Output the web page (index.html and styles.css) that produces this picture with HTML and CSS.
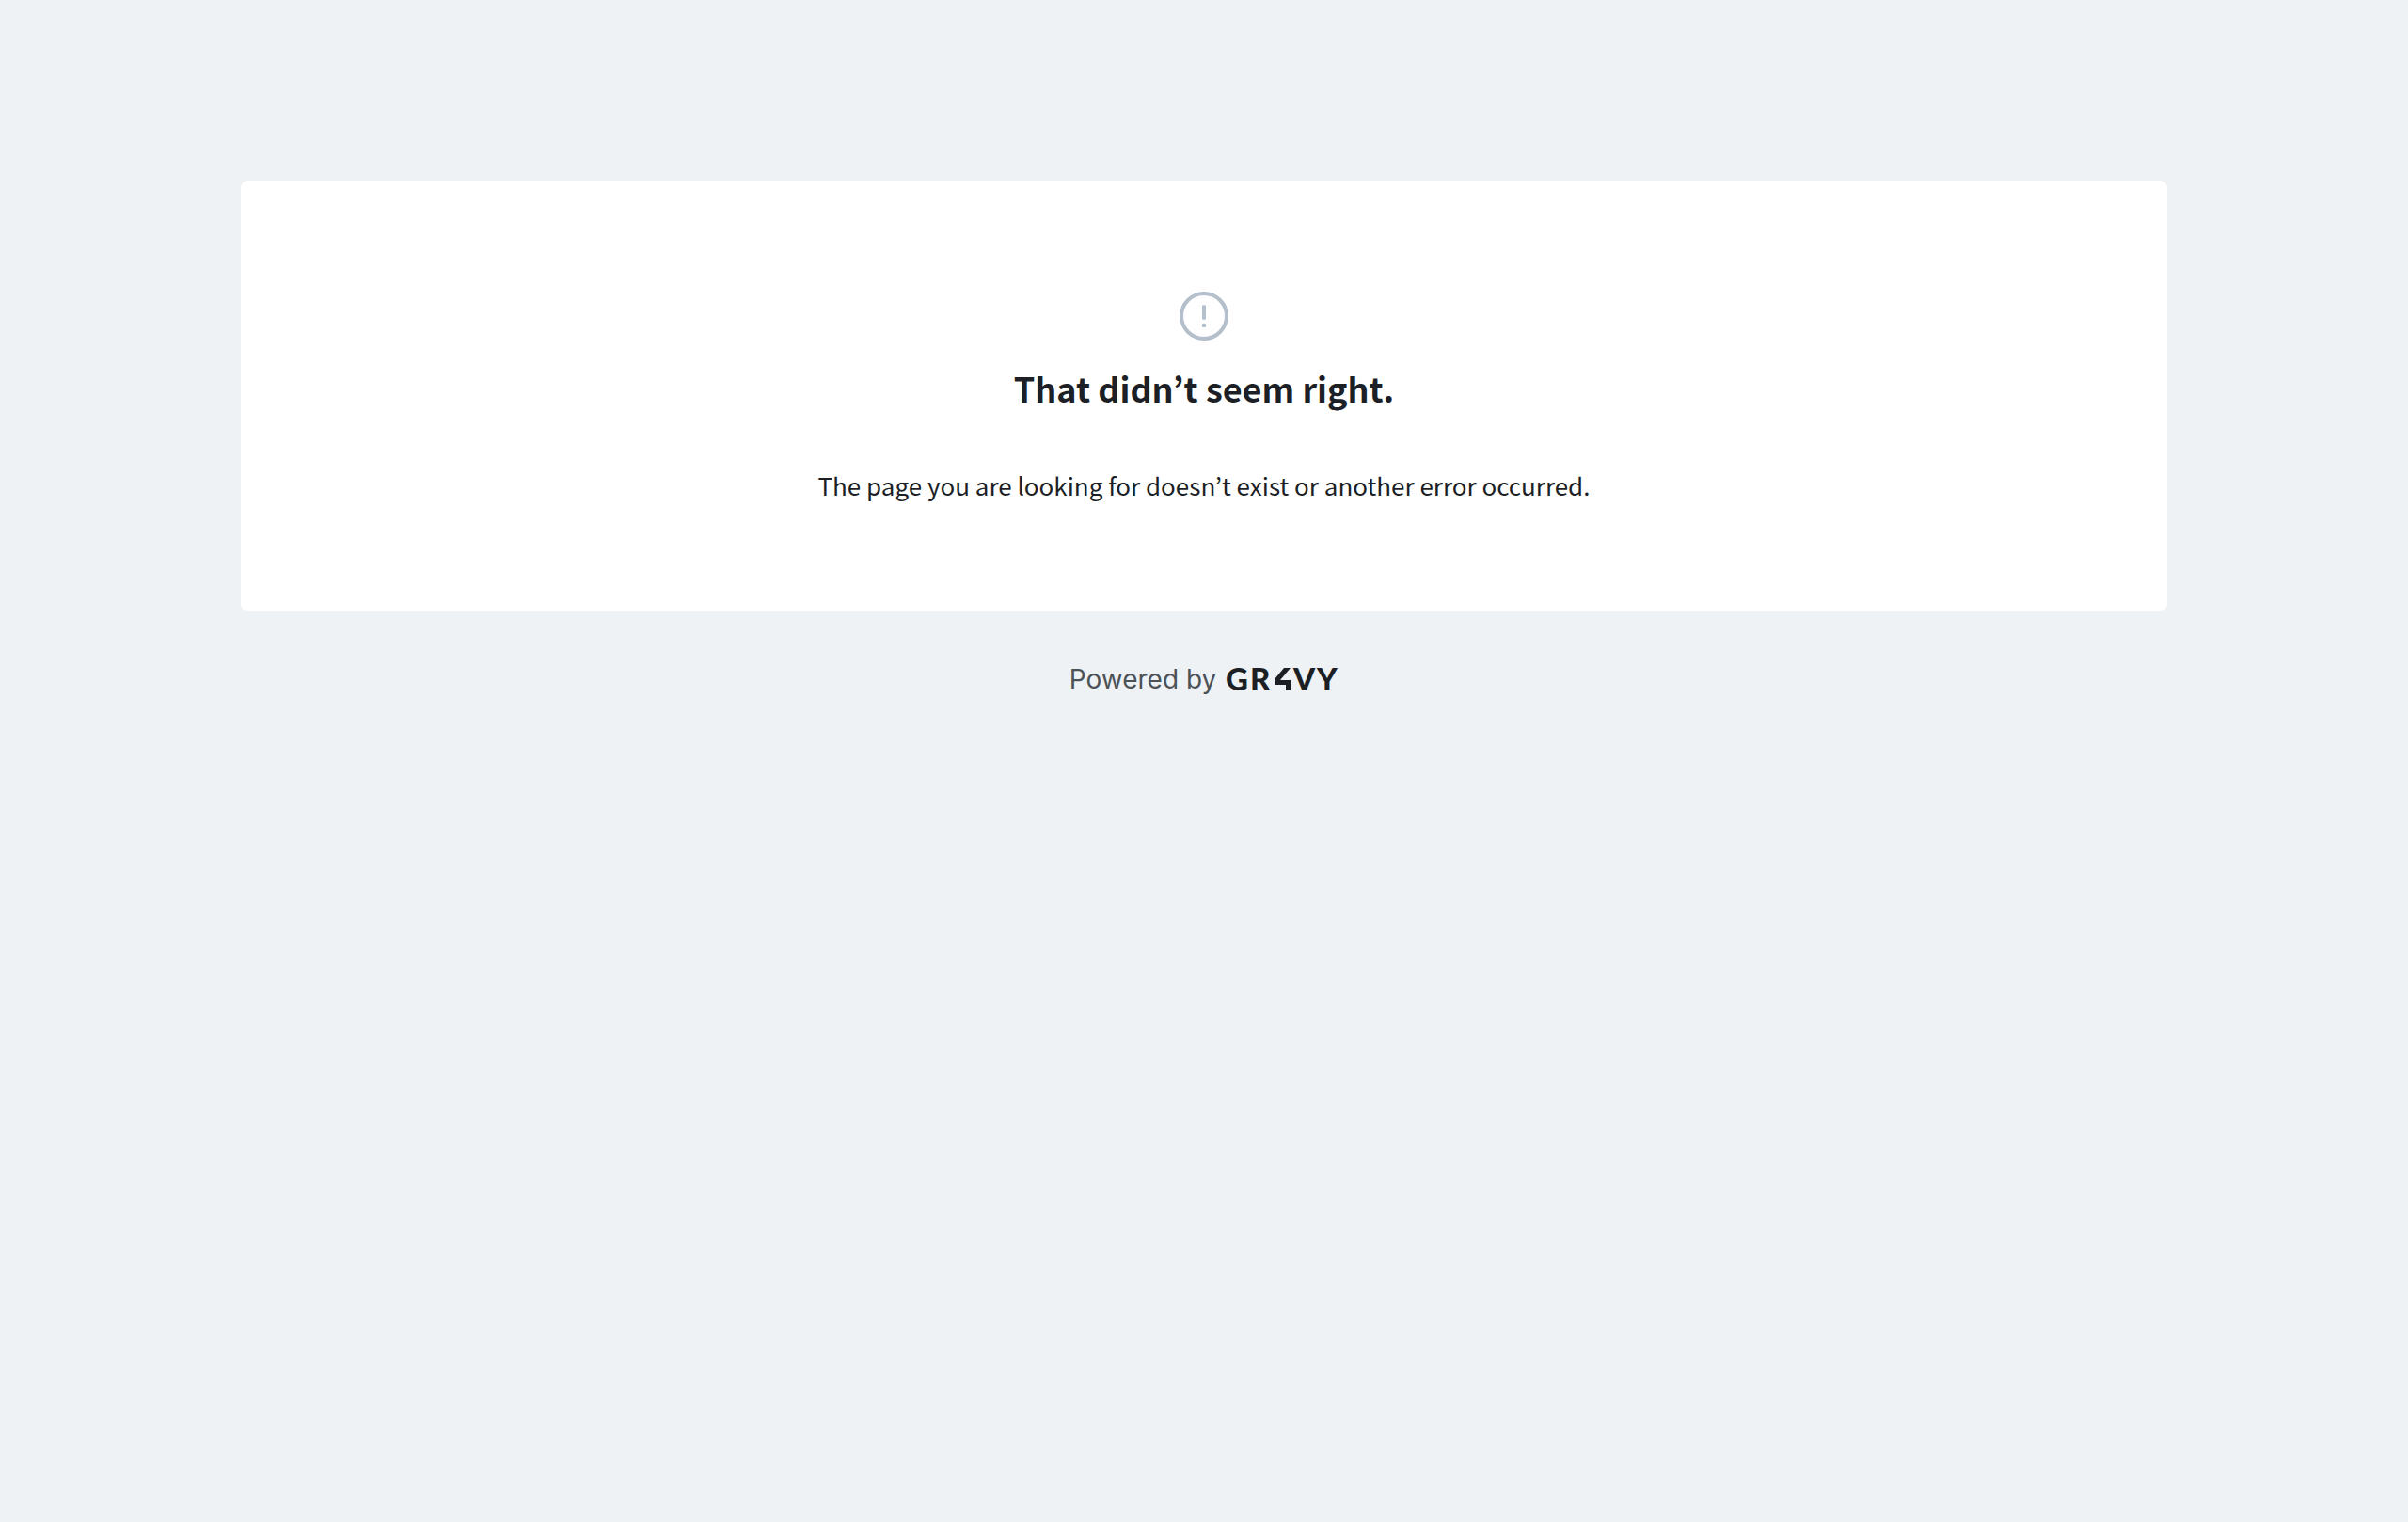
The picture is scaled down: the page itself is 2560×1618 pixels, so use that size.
FILE: index.html
```html
<!DOCTYPE html>
<html lang="en">
<head>
  <meta charset="utf-8">
  <meta name="viewport" content="width=device-width, initial-scale=1">
  <title>That didn’t seem right.</title>
  <link rel="stylesheet" href="styles.css">
</head>
<body>
  <main class="card">
    <svg class="card-icon" viewBox="0 0 64 64" aria-hidden="true">
      <circle cx="32" cy="32" r="24" fill="none" stroke="currentColor" stroke-width="4"/>
      <path d="M32 22v12" stroke="currentColor" stroke-width="4" stroke-linecap="round"/>
      <circle cx="32" cy="42" r="2.3" fill="currentColor"/>
    </svg>
    <h1 class="card-title">That didn’t seem right.</h1>
    <p class="card-text">The page you are looking for doesn’t exist or another error occurred.</p>
  </main>
  <footer class="footer">
    <span>Powered by</span>
    <svg class="logo" viewBox="0 0 120 40" role="img" aria-label="GR4VY">
      <text class="logo-text" x="0" y="32">G</text>
      <text class="logo-text" x="26" y="32">R</text>
      <path d="M62 8h7L58 21h11v11h-5v-6H52v-6z" fill="currentColor"/>
      <text class="logo-text" x="72" y="32">V</text>
      <text class="logo-text" x="97" y="32">Y</text>
    </svg>
  </footer>
</body>
</html>
```
FILE: styles.css
```css
body {
  margin: 0;
  padding: 192px 10%;
  background: #eef2f5;
  color: #1c1f26;
  font-family: "Noto Sans CJK KR", "Noto Sans", sans-serif;
}

.card {
  display: flex;
  flex-direction: column;
  align-items: center;
  padding: 112px 48px;
  border-radius: 8px;
  background: #fff;
  text-align: center;
}

.card-icon {
  width: 64px;
  height: 64px;
  color: #b3bfcb;
}

.card-title {
  margin: 20px 0 0;
  font-size: 36px;
  line-height: 48px;
  font-weight: 700;
}

.card-text {
  margin: 58px 0 0;
  font-size: 26px;
  line-height: 44px;
}

.footer {
  display: flex;
  justify-content: center;
  align-items: center;
  gap: 10px;
  margin-top: 52px;
  color: #4d5257;
  font-family: Inter, sans-serif;
  font-size: 28px;
  line-height: 40px;
}

.logo {
  width: 120px;
  height: 40px;
  color: #1c1f23;
}

.logo-text {
  fill: currentColor;
  font-family: Lato, sans-serif;
  font-size: 33px;
  font-weight: 900;
}
```
